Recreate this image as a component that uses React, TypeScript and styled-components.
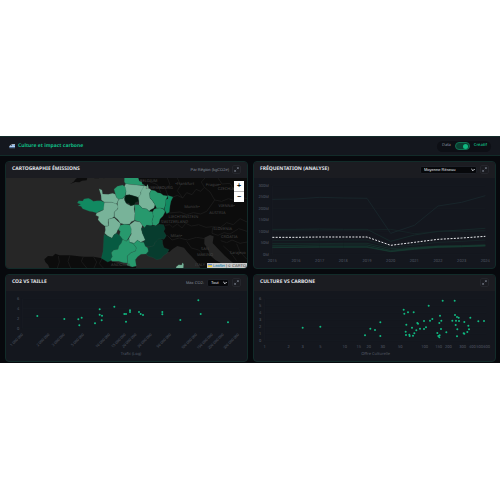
import React, { useState } from 'react'
import styled, { createGlobalStyle } from 'styled-components'

const _GREEN = '#10b981'
const _BG = '#07090d'
const _PANEL = '#14171e'
const _HEAD = '#1b1c21'
const _BORDER = '#122b29'
const _MUTED = '#525865'
const _LIGHT = '#e2e5ea'

const GlobalStyle = createGlobalStyle`
	* {
		box-sizing: border-box;
	}
	body {
		margin: 0;
		background-color: #fff;
		font-family: 'Noto Sans', sans-serif;
		text-rendering: geometricPrecision;
	}
`

const Page = styled.div`
	padding-top: 136px;
`

const Dashboard = styled.div`
	background-color: ${_BG};
`

const Header = styled.header`
	display: flex;
	align-items: center;
	justify-content: space-between;
	height: 20px;
	padding: 0 9px;
	background-color: ${_PANEL};
	border-top: 1px solid ${_BORDER};
	border-bottom: 1px solid ${_BORDER};
`

const Brand = styled.h1`
	display: flex;
	align-items: center;
	gap: 3px;
	margin: 0;
	font-weight: 700;
	font-size: 5px;
	line-height: 7px;
	color: ${_GREEN};
	svg {
		width: 6px;
		height: 6px;
	}
`

const ModeSwitch = styled.label`
	display: flex;
	align-items: center;
	gap: 4px;
	height: 11px;
	padding: 0 4px 0 5px;
	border-radius: 6px;
	background-color: #0d0f15;
	font-size: 4px;
	line-height: 6px;
	color: #8b93a1;
`

const ModeName = styled.span`
	font-weight: 600;
	color: ${_GREEN};
`

const Toggle = styled.input`
	appearance: none;
	display: flex;
	align-items: center;
	width: 15px;
	height: 8px;
	margin: 0;
	padding: 0 1px;
	border: 1px solid #0f6e50;
	border-radius: 4px;
	background-color: #0b4032;
	&::before {
		content: '';
		width: 5px;
		height: 5px;
		border-radius: 50%;
		background-color: ${_GREEN};
	}
	&:checked {
		justify-content: flex-end;
	}
`

const Grid = styled.main`
	display: grid;
	grid-template-columns: repeat(2, minmax(0, 1fr));
	gap: 5px;
	padding: 5px 4px 1px 5px;
`

const Card = styled.section`
	overflow: hidden;
	border: 1px solid ${_BORDER};
	border-radius: 4px;
	background-color: ${_PANEL};
`

const CardHeader = styled.div`
	display: flex;
	align-items: center;
	justify-content: space-between;
	height: 16px;
	padding: 0 6px 1px;
	background-color: ${_HEAD};
`

const CardTitle = styled.h2`
	margin: 0;
	font-weight: 700;
	font-size: 5px;
	line-height: 7px;
	text-transform: uppercase;
	color: ${_LIGHT};
`

const Tools = styled.div`
	display: flex;
	align-items: center;
	gap: 3px;
`

const Hint = styled.span`
	font-family: 'Liberation Sans', sans-serif;
	font-size: 4px;
	line-height: 6px;
	color: #858c99;
`

const SelectLabel = styled(Hint).attrs({ as: 'label' })<{ htmlFor?: string }>``

const Select = styled.select<{ $wide?: boolean }>`
	appearance: none;
	width: ${({ $wide }) => ($wide ? 57 : 22)}px;
	height: 8px;
	padding: 0 3px;
	border: 1px solid #1d2027;
	border-radius: 2px;
	background: #07080b;
	font-family: 'Liberation Sans', sans-serif;
	font-size: 4px;
	line-height: 6px;
	color: ${_LIGHT};
`

const SelectBox = styled.div`
	position: relative;
	display: flex;
	svg {
		position: absolute;
		right: 2px;
		top: 2px;
		width: 4px;
		height: 4px;
		pointer-events: none;
	}
`

const ExpandBtn = styled.button`
	display: flex;
	align-items: center;
	justify-content: center;
	width: 9px;
	height: 9px;
	padding: 0;
	border: 1px solid #24262c;
	border-radius: 2px;
	background: none;
	svg {
		width: 5px;
		height: 5px;
	}
`

const Plot = styled.svg`
	display: block;
	width: 100%;
	height: auto;
	font-size: 12px;
	text {
		fill: ${_MUTED};
	}
`

const TiltedTick = styled.text`
	font-size: 11px;
`

const MapBox = styled.div`
	position: relative;
`

const MapSvg = styled.svg`
	display: block;
	width: 100%;
	height: auto;
	background-color: #262626;
	text {
		font-size: 12px;
		fill: #434343;
	}
`

const ZoomControl = styled.div`
	position: absolute;
	top: 3px;
	right: 3px;
	display: flex;
	flex-direction: column;
	gap: 1px;
	border-radius: 1px;
	background-color: #bbb;
`

const ZoomBtn = styled.button`
	width: 10px;
	height: 10px;
	padding: 0;
	border: 0;
	background-color: #fff;
	font: bold 7px/10px 'Liberation Sans', sans-serif;
	color: #111;
`

const Attribution = styled.div`
	position: absolute;
	right: 0;
	bottom: 0;
	display: flex;
	align-items: center;
	gap: 1px;
	height: 5px;
	padding: 0 1px;
	background-color: #c9c9c9;
	font: 4px/5px 'Liberation Sans', sans-serif;
	color: #333;
	white-space: nowrap;
	svg {
		width: 4px;
		height: 3px;
	}
	a {
		color: #0078a8;
		text-decoration: none;
	}
`

type Region = { name: string, color: string, points: string }

const PALE = '#78b399'
const MID = '#27996d'
const STRONG = '#118a61'
const DEEP = '#065a41'
const DARK = '#073c2e'

const regions: Region[] = [
	{ name: 'Nord-Pas-de-Calais', color: MID, points: '103,16 144,16 148,27 155,29 157,36 165,40 140,39 118,37 107,35 103,30' },
	{ name: 'Picardie', color: PALE, points: '107,35 118,37 140,39 163,41 160,55 152,60 153,68 145,76 132,72 118,68 107,71 108,58 102,46' },
	{ name: 'Haute-Normandie', color: MID, points: '72,52 82,43 98,39 106,46 108,58 106,70 98,80 86,82 79,76 76,66' },
	{ name: 'Basse-Normandie', color: PALE, points: '27,50 36,54 38,66 55,67 68,64 76,67 79,76 86,82 82,92 78,97 66,91 42,90 34,84 33,70' },
	{ name: 'Bretagne', color: STRONG, points: '-38,93 -34,86 -22,87 -18,81 -5,79 2,82 10,88 22,86 32,86 43,91 44,104 40,114 28,118 20,123 8,119 -2,118 -12,114 -22,110 -27,103 -36,101 -28,97' },
	{ name: 'Pays de la Loire', color: PALE, points: '43,91 66,91 80,96 86,104 82,112 73,120 72,134 66,139 55,142 54,152 56,162 44,162 33,154 24,143 26,134 17,130 20,123 40,114' },
	{ name: 'Poitou-Charentes', color: PALE, points: '55,142 66,139 73,137 82,146 91,154 91,165 83,174 79,184 72,188 66,199 54,193 44,184 46,174 45,163 56,162' },
	{ name: 'Centre', color: PALE, points: '86,82 98,80 106,73 103,84 110,95 122,101 134,98 132,111 135,124 134,145 124,149 119,156 103,157 91,154 84,143 73,134 73,120 84,110 82,94' },
	{ name: 'Île-de-France', color: '#03190f', points: '103,78 108,69 118,68 132,72 143,76 147,88 136,92 134,98 122,101 117,94 108,93' },
	{ name: 'Champagne-Ardenne', color: PALE, points: '163,41 170,43 173,37 176,48 184,54 179,63 180,78 188,87 195,98 192,108 182,113 177,118 170,111 157,109 147,98 147,88 145,76 153,66 152,60' },
	{ name: 'Lorraine', color: MID, points: '184,54 195,56 203,62 212,64 220,70 233,72 228,83 227,97 222,111 211,108 200,109 195,98 188,87 180,78 179,63' },
	{ name: 'Alsace', color: STRONG, points: '233,70 249,75 243,88 240,102 238,121 230,125 223,112 227,97 226,83 234,80' },
	{ name: 'Bourgogne', color: MID, points: '134,98 147,98 157,109 170,111 177,118 188,119 190,134 186,148 188,159 180,163 170,159 164,167 157,160 150,150 134,145 135,124' },
	{ name: 'Franche-Comté', color: MID, points: '192,112 200,109 211,108 223,113 225,120 219,132 210,141 207,153 198,161 188,159 186,148 190,134 188,120' },
	{ name: 'Auvergne', color: PALE, points: '134,147 150,150 157,160 154,172 157,183 163,196 166,204 152,211 142,205 133,214 117,211 117,199 124,186 120,171 119,158' },
	{ name: 'Limousin', color: MID, points: '91,160 103,157 119,158 124,171 123,185 116,197 109,208 97,202 88,190 91,178 85,173' },
	{ name: 'Rhône-Alpes', color: DARK, points: '154,168 164,167 170,159 188,161 198,162 207,157 221,158 225,170 221,178 229,191 222,202 206,201 195,212 191,222 180,224 166,223 160,211 166,204 157,183' },
	{ name: 'PACA', color: DARK, points: '180,224 191,222 195,212 206,201 217,204 218,216 222,227 237,233 231,244 220,251 213,260 200,263 190,257 174,252 168,246 175,238 173,227' },
	{ name: 'Aquitaine', color: DEEP, points: '42,187 54,193 66,199 72,188 80,184 90,192 98,202 94,213 87,221 84,232 70,235 64,242 67,254 62,266 53,270 43,264 34,259 39,238' },
	{ name: 'Midi-Pyrénées', color: MID, points: '98,202 109,208 117,200 119,211 130,215 139,227 137,237 123,242 112,252 113,273 101,272 86,268 66,268 62,262 67,254 64,242 70,235 84,232 87,221 94,213' },
	{ name: 'Languedoc-Roussillon', color: MID, points: '119,211 133,214 142,205 152,211 161,211 166,223 173,227 175,238 168,246 153,247 143,254 136,263 139,282 127,285 111,280 113,273 112,252 123,242 137,237 139,227 130,215' },
	{ name: 'Corse', color: PALE, points: '258,285 266,278 275,279 277,272 281,276 280,292 259,292' },
]

const cities = [
	{ name: 'LUXEMBOURG', x: 208, y: 51 },
	{ name: 'BELGIUM', x: 176, y: 30 },
	{ name: '•Frankfurt', x: 284, y: 40 },
	{ name: 'Prague•', x: 370, y: 42 },
	{ name: 'CZECHIA', x: 408, y: 54 },
	{ name: 'Munich•', x: 306, y: 108 },
	{ name: 'VIENNA•', x: 410, y: 105 },
	{ name: 'AUSTRIA', x: 382, y: 126 },
	{ name: 'LIECHTENSTEIN', x: 280, y: 138 },
	{ name: 'SWITZERLAND', x: 254, y: 154 },
	{ name: 'SLOVENIA', x: 398, y: 174 },
	{ name: 'Milan•', x: 259, y: 194 },
	{ name: 'CROATIA', x: 418, y: 197 },
	{ name: 'SAN', x: 345, y: 235 },
	{ name: 'MARINO', x: 345, y: 251 },
	{ name: 'Sarajevo', x: 443, y: 246 },
	{ name: 'ITALY', x: 330, y: 281 },
	{ name: 'ANDORRA', x: 92, y: 282 },
]

const years = [2015, 2016, 2017, 2018, 2019, 2020, 2021, 2022, 2023, 2024]
const visitTicks = ['300M', '250M', '200M', '150M', '100M', '50M', '0M']
const yearX = (i: number) => 67 + i * 71

const networks = [
	{ color: '#1a2c30', values: [82, 81, 76, 78, 79, 184, 160, 102, 91, 71] },
	{ color: '#17302f', values: [172, 172, 171, 172, 172, 208, 189, 178, 174, 169] },
	{ color: '#172729', values: [174, 174, 174, 174, 174, 172, 185, 179, 178, 176] },
	{ color: '#16352e', values: [215, 215, 215, 214, 214, 230, 226, 222, 221, 218] },
	{ color: '#154034', values: [220, 220, 219, 219, 219, 235, 228, 223, 222, 220] },
	{ color: '#164536', values: [225, 225, 224, 224, 224, 238, 230, 225, 224, 221] },
	{ color: '#163c32', values: [227, 226, 226, 226, 226, 239, 232, 226, 224, 222] },
	{ color: '#162a2a', values: [205, 205, 204, 204, 204, 226, 219, 211, 208, 204] },
]
const average = [196, 196, 195, 195, 195, 220, 211, 202, 198, 193]

const toLine = (values: number[]) => values.map((v, i) => `${yearX(i)},${v}`).join(' ')

const sizeTicks: [string, number][] = [
	['1 000 000', 70], ['2 000 000', 149], ['3 000 000', 195], ['5 000 000', 253],
	['10 000 000', 331], ['15 000 000', 378], ['20 000 000', 410], ['30 000 000', 456],
	['50 000 000', 514], ['100 000 000', 592], ['150 000 000', 639], ['200 000 000', 672], ['300 000 000', 718],
]

const sizeDots = [
	[112, 138], [193, 147], [235, 148], [245, 143], [238, 166], [285, 160], [299, 118], [299, 134],
	[306, 137], [305, 151], [343, 110], [373, 132], [378, 132], [378, 155], [390, 121], [390, 126],
	[417, 126], [422, 132], [429, 135], [487, 126], [487, 133], [541, 150], [595, 91], [602, 132], [684, 157],
]

const cultureTicks: [string, number][] = [
	['1', 44], ['2', 116], ['3', 158], ['5', 211], ['10', 284], ['15', 326], ['20', 356], ['30', 398],
	['50', 451], ['100', 524], ['150', 566], ['200', 595], ['300', 638], ['400', 667], ['500', 689], ['600', 710],
]

const cultureDots = [
	[158, 173], [211, 170], [345, 196], [361, 176], [375, 180], [391, 157], [391, 198], [461, 119], [463, 131],
	[474, 127], [491, 127], [536, 107], [578, 92], [614, 92], [570, 137], [574, 152], [568, 159], [547, 147],
	[540, 152], [522, 153], [502, 159], [504, 161], [469, 164], [486, 173], [499, 181], [510, 176], [522, 177],
	[528, 172], [467, 185], [468, 195], [478, 194], [479, 198], [489, 197], [493, 190], [573, 177], [562, 189],
	[569, 196], [565, 198], [568, 202], [589, 187], [607, 152], [615, 135], [621, 141], [626, 143], [618, 152],
	[627, 153], [617, 165], [622, 178], [621, 199], [643, 156], [643, 191], [641, 190], [652, 186], [657, 178],
	[655, 167], [661, 143], [685, 154], [702, 153],
]

const TrainIcon = () => (
	<svg viewBox='0 0 24 24' aria-hidden='true'>
		<path d='M1 15C3 9 8 5 14 5h10v12H3c-2 0-3-1-2-2z' fill='#dce8f5' />
		<path d='M5 11c2-3 4-4 7-4v4z' fill='#27364a' />
		<path d='M14 8h3v4h-3zM19 8h4v4h-4z' fill='#4a8fdc' />
		<path d='M1 15h23v3H3c-2 0-3-1-2-3z' fill='#3f7fd0' />
		<path d='M2 20h22' stroke='#66758a' strokeWidth='2' />
	</svg>
)

const Expand = ({ label }: { label: string }) => (
	<ExpandBtn type='button' aria-label={`Agrandir ${label}`}>
		<svg viewBox='0 0 24 24' fill='none' stroke='#7d8491' strokeWidth='3'>
			<path d='M14 3h7v7M21 3l-7 7M10 21H3v-7M3 21l7-7' />
		</svg>
	</ExpandBtn>
)

const Chevron = () => (
	<svg viewBox='0 0 12 12' fill='none' stroke='#e2e5ea' strokeWidth='3' aria-hidden='true'>
		<path d='M1 3l5 5 5-5' />
	</svg>
)

const FranceMap = () => (
	<MapBox>
		<MapSvg viewBox='-252 18 723 270' role='img' aria-label='Carte des émissions par région'>
			<g fill='#0c0c0c'>
				<path d='M-60,36 L-50,30 L-42,20 L-35,16 L-8,16 L-10,25 L-24,26 L-32,31 L-44,30 Z M10,16 L32,16 L26,19 L14,19 Z M38,16 L46,16 L42,19 Z' />
				<path d='M-137,262 L-126,252 L-112,253 L-104,245 L-92,250 L-60,250 L-20,254 L10,254 L36,259 L62,268 L110,279 L138,283 L138,292 L-120,292 L-126,278 L-134,270 Z' />
				<path d='M144,16 L473,16 L473,292 L450,292 L432,275 L405,252 L384,230 L368,213 L371,193 L360,189 L343,197 L343,216 L352,228 L360,250 L376,264 L402,278 L418,292 L334,292 L320,270 L304,253 L292,240 L282,227 L262,222 L248,231 L238,240 L215,240 L180,160 Z' />
			</g>
			<g fill='none' stroke='#212121' strokeWidth='2'>
				<path d='M-95,252 L-92,270 L-98,288 M-60,250 L-66,268 L-58,288 M-20,254 L-26,268 L-10,288 M10,254 L20,270 L12,288 M36,259 L28,275 L40,288' />
				<path d='M247,76 L262,70 L278,78 L290,62 L306,68 L318,52 L332,58 L343,46 L360,60 L374,84 L366,96 L350,118 L332,126 L310,122 L290,128 L270,120 L238,123' />
				<path d='M374,84 L395,88 L415,80 L434,86 L452,76 L471,80 M262,18 L272,40 L262,56 L278,78 M343,46 L334,30 L345,18 M384,18 L396,36 L420,34 L435,58' />
				<path d='M225,160 L240,158 L248,166 L262,156 L276,168 L287,154 L304,162 L326,158 L348,166 L368,164 L392,166 L410,152 L430,158 L450,140 L471,150' />
				<path d='M368,166 L366,184 L384,190 L402,182 L420,186 L446,170 L471,178 M392,206 L410,212 L426,204 L450,214 L471,210 M400,222 L420,240 L440,266 M440,215 L450,240 L471,262' />
				<path d='M232,190 L246,204 L268,198 L292,204 L320,196 L344,200 M290,208 L304,228 L326,234 L344,252 M180,30 L202,38 L212,60 M234,72 L226,50 L240,38 L232,18' />
			</g>
			<g stroke='#2f5c4b' strokeOpacity='0.6' strokeWidth='1' strokeLinejoin='round'>
				{regions.map(({ name, color, points }) => (
					<polygon key={name} fill={color} points={points}><title>{name}</title></polygon>
				))}
			</g>
			{cities.map(({ name, x, y }) => <text key={name} x={x} y={y} textAnchor='middle'>{name}</text>)}
		</MapSvg>
		<ZoomControl>
			<ZoomBtn type='button' aria-label='Zoom avant'>+</ZoomBtn>
			<ZoomBtn type='button' aria-label='Zoom arrière'>−</ZoomBtn>
		</ZoomControl>
		<Attribution>
			<svg viewBox='0 0 12 8' aria-hidden='true'>
				<path fill='#4c7be1' d='M0 0h12v4H0z' />
				<path fill='#ffd500' d='M0 4h12v4H0z' />
			</svg>
			<a href='#leaflet'>Leaflet</a>
			<span>| © CARTO</span>
		</Attribution>
	</MapBox>
)

const VisitsChart = () => (
	<Plot viewBox='12 18 723 270' role='img' aria-label='Fréquentation par année'>
		{visitTicks.map((tick, i) => (
			<g key={tick}>
				<path d={`M67 ${41 + i * 34.4}H707`} stroke='#191d24' />
				<text x='57' y={45 + i * 34.4} textAnchor='end'>{tick}</text>
			</g>
		))}
		<path d='M67 41V247' stroke='#1e222a' />
		{years.map((year, i) => <text key={year} x={yearX(i)} y='270' textAnchor='middle'>{year}</text>)}
		{networks.map(({ color, values }, i) => (
			<polyline key={i} points={toLine(values)} fill='none' stroke={color} strokeWidth='2' />
		))}
		<polyline points={toLine(average)} fill='none' stroke='#e8eaed' strokeWidth='3' strokeDasharray='6 4' />
	</Plot>
)

const Dots = ({ items }: { items: number[][] }) => (
	<g fill={_GREEN}>
		{items.map(([x, y]) => <circle key={`${x}-${y}`} cx={x} cy={y} r='3' />)}
	</g>
)

const SizeChart = () => (
	<Plot viewBox='18 63 723 210' role='img' aria-label='CO2 selon le trafic'>
		{[6, 4, 2, 0].map((tick, i) => (
			<g key={tick}>
				<path d={`M67 ${86 + i * 29.5}H718`} stroke='#191d24' />
				<text x='58' y={90 + i * 29.5} textAnchor='end'>{tick}</text>
			</g>
		))}
		<path d='M67 86V175' stroke='#1e222a' />
		{sizeTicks.map(([tick, x]) => (
			<TiltedTick key={tick} x={x} y='194' textAnchor='end' transform={`rotate(-45 ${x} 194)`}>{tick}</TiltedTick>
		))}
		<text x='393' y='255' textAnchor='middle'>Trafic (Log)</text>
		<Dots items={sizeDots} />
	</Plot>
)

const CultureChart = () => (
	<Plot viewBox='12 63 723 210' role='img' aria-label='Carbone selon l’offre culturelle'>
		{[6, 5, 4, 3, 2, 1, 0].map((tick, i) => (
			<g key={tick}>
				<path d={`M44 ${86 + i * 21}H710`} stroke='#191d24' />
				<text x='34' y={90 + i * 21} textAnchor='end'>{tick}</text>
			</g>
		))}
		<path d='M44 86V212' stroke='#1e222a' />
		{cultureTicks.map(([tick, x]) => <text key={tick} x={x} y='234' textAnchor='middle'>{tick}</text>)}
		<text x='377' y='255' textAnchor='middle'>Offre Culturelle</text>
		<Dots items={cultureDots} />
	</Plot>
)

const App: React.FC = () => {
	const [creative, setCreative] = useState(true)

	return (
		<Page>
			<GlobalStyle />
			<Dashboard>
				<Header>
					<Brand><TrainIcon />Culture et impact carbone</Brand>
					<ModeSwitch>
						<span>Data</span>
						<Toggle type='checkbox' checked={creative} onChange={e => setCreative(e.target.checked)} />
						<ModeName>Créatif</ModeName>
					</ModeSwitch>
				</Header>
				<Grid>
					<Card>
						<CardHeader>
							<CardTitle>Cartographie émissions</CardTitle>
							<Tools>
								<Hint>Par Région (kgCO2e)</Hint>
								<Expand label='la carte' />
							</Tools>
						</CardHeader>
						<FranceMap />
					</Card>
					<Card>
						<CardHeader>
							<CardTitle>Fréquentation (analyse)</CardTitle>
							<Tools>
								<SelectBox>
									<Select $wide aria-label='Réseau'><option>Moyenne Réseau</option></Select>
									<Chevron />
								</SelectBox>
								<Expand label='la fréquentation' />
							</Tools>
						</CardHeader>
						<VisitsChart />
					</Card>
					<Card>
						<CardHeader>
							<CardTitle>CO2 vs taille</CardTitle>
							<Tools>
								<SelectLabel htmlFor='max-co2'>Max CO2:</SelectLabel>
								<SelectBox>
									<Select id='max-co2'><option>Tout</option></Select>
									<Chevron />
								</SelectBox>
								<Expand label='CO2 vs taille' />
							</Tools>
						</CardHeader>
						<SizeChart />
					</Card>
					<Card>
						<CardHeader>
							<CardTitle>Culture vs carbone</CardTitle>
							<Tools>
								<Expand label='culture vs carbone' />
							</Tools>
						</CardHeader>
						<CultureChart />
					</Card>
				</Grid>
			</Dashboard>
		</Page>
	)
}

export default App
